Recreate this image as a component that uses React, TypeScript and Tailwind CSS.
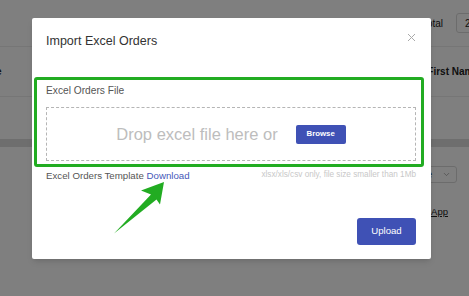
import { ChevronDown } from "lucide-react";

function BackgroundPage() {
  return (
    <div className="flex h-[296px] w-full flex-col overflow-hidden bg-white text-[#222]">
      {/* toolbar */}
      <div className="flex h-[47px] items-center justify-end gap-[13px] border-b border-[#ececec]">
        <span className="text-[10px]">Total</span>
        <div className="-mr-[27px] flex h-[20px] w-[40px] items-center rounded-[3px] border border-[#d9d9d9] pl-[8px] text-[10px]">
          20
        </div>
      </div>

      {/* table head */}
      <div className="flex h-[50px] items-center justify-between border-b border-[#ececec] text-[10px] font-bold">
        <span className="-ml-[20px]">Date</span>
        <span className="-mr-[10px] whitespace-nowrap">First Name</span>
      </div>

      <div className="h-[42px]" />
      <div className="h-[8px] bg-[#dcdcdc]" />

      {/* pager */}
      <div className="mt-[19px] flex justify-end pr-[12px]">
        <div className="flex h-[17px] w-[80px] items-center justify-end gap-[10px] rounded-[3px] border border-[#d9d9d9] pr-[5px] text-[10px]">
          <span>page</span>
          <ChevronDown size={9} className="text-[#999]" />
        </div>
      </div>

      <div className="mt-[22px] flex justify-end pr-[21px]">
        <span className="text-[9.5px] underline">Download App</span>
      </div>
    </div>
  );
}

function ImportModal() {
  return (
    <div className="flex h-[241px] w-[399px] flex-col rounded-[2px] bg-white pl-[14px] pr-[15px] pt-[16px] shadow-md">
      <div className="flex items-start justify-between">
        <h3 className="text-[12.5px] leading-[15px] text-[#333]">Import Excel Orders</h3>
        <svg width="9" height="9" viewBox="0 0 9 9" className="-mt-[1px] text-[#aaa]">
          <path d="M1 1L8 8M8 1L1 8" stroke="currentColor" strokeWidth="1" />
        </svg>
      </div>

      {/* highlighted upload area */}
      <div className="-ml-[12px] -mr-[8px] mt-[28px] rounded-[3px] border-[3px] border-[#22ac22] pb-[3px] pl-[9px] pr-[5px] pt-[5px]">
        <div className="text-[10.2px] leading-[12px] text-[#555]">Excel Orders File</div>
        <div className="mt-[10px] flex h-[54px] items-center justify-center gap-[18px] border border-dashed border-[#b5b5b5]">
          <span className="text-[16.5px] text-[#bdbdbd]">Drop excel file here or</span>
          <button className="flex h-[19px] w-[50px] items-center justify-center rounded-[2px] bg-[#3f51b5] text-[7.8px] font-bold text-white">
            Browse
          </button>
        </div>
      </div>

      <div className="mt-[3px] flex items-start justify-between">
        <div className="text-[9.7px] leading-[12px] text-[#555]">
          Excel Orders Template <span className="text-[#4557b8]">Download</span>
        </div>
        <div className="text-[8.2px] leading-[10px] text-[#c8c8c8]">
          xlsx/xls/csv only, file size smaller than 1Mb
        </div>
      </div>

      <div className="mt-[36px] flex justify-end">
        <button className="flex h-[27px] w-[59px] items-center justify-center rounded-[3px] bg-[#3f51b5] text-[9.6px] text-white">
          Upload
        </button>
      </div>
    </div>
  );
}

export default function App() {
  return (
    <div
      className="relative h-[296px] w-[469px] overflow-hidden"
      style={{ fontFamily: '"Liberation Sans", Arial, sans-serif' }}
    >
      <BackgroundPage />

      {/* dialog overlay */}
      <div className="absolute inset-0 bg-black/50 pl-[32px] pt-[18px]">
        <ImportModal />
      </div>

      {/* annotation arrow */}
      <svg
        width="469"
        height="296"
        viewBox="0 0 469 296"
        className="pointer-events-none absolute left-0 top-0"
      >
        <path
          d="M164 182 L141 190.5 L151 194.5 L114 233.5 L156.5 199.5 L160 204.5 Z"
          fill="#22ac22"
        />
      </svg>
    </div>
  );
}
